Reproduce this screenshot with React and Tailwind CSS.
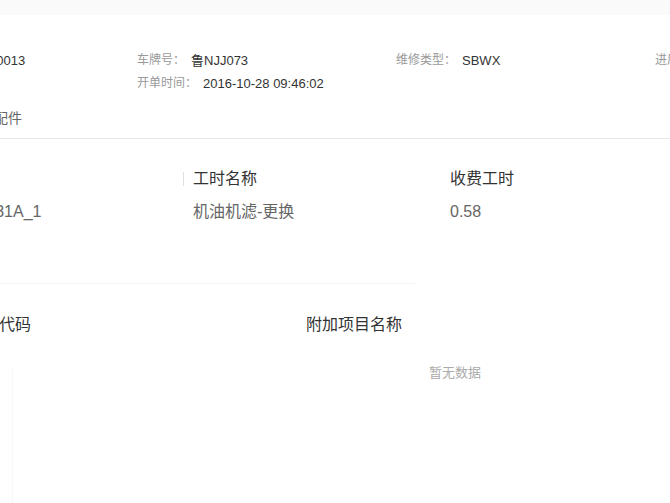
import React from 'react';

const font = { fontFamily: '"Liberation Sans", "Noto Sans CJK SC", sans-serif' };

const infoRows = [
  [
    { label: '工单号：', value: 'WX2016100013' },
    { label: '车牌号：', value: '鲁NJJ073' },
    { label: '维修类型：', value: 'SBWX' },
    { label: '进厂里程：', value: '12000' },
  ],
  [
    { label: '服务顾问：', value: '王军' },
    { label: '开单时间：', value: '2016-10-28 09:46:02' },
    null,
    null,
  ],
];

function InfoItem({ item }) {
  if (!item) return <div />;
  return (
    <div className="flex items-center whitespace-nowrap">
      <span className="text-[12px] text-[#999] mr-[6px]">{item.label}</span>
      <span className="text-[13px] text-[#333]">{item.value}</span>
    </div>
  );
}

export default function App() {
  return (
    <div className="w-[670px] h-[503px] overflow-hidden bg-white relative text-xs" style={font}>
      <div className="h-[15px] bg-[#fafafa]" />

      {/* order info */}
      <div className="pt-[34px] ml-[-122px]">
        {infoRows.map((row, i) => (
          <div key={i} className="grid grid-cols-[259px_259px_259px_259px] h-[23px] items-center">
            {row.map((item, j) => (
              <InfoItem key={j} item={item} />
            ))}
          </div>
        ))}
      </div>

      {/* tabs */}
      <div className="mt-[12px] border-b border-[#e8e8e8] ml-[-34px] pb-[9px] flex gap-8">
        <span className="text-[14px] leading-[22px] text-[#666]">工时配件</span>
      </div>

      {/* labour table */}
      <div className="ml-[-64px] mt-[28px] text-[16px] leading-[24px]">
        <div className="grid grid-cols-[257px_257px_257px] text-[#333]">
          <div>工时代码</div>
          <div className="relative">
            <span className="absolute left-[-10px] top-[5px] h-[14px] w-px bg-[#e0e0e0]" />
            工时名称
          </div>
          <div>收费工时</div>
        </div>
        <div className="grid grid-cols-[257px_257px_257px] text-[#666] mt-[9px]">
          <div className="-ml-[4px]">JY0000131A_1</div>
          <div>机油机滤-更换</div>
          <div>0.58</div>
        </div>
      </div>

      <div className="mt-[59px] h-px w-[415px] bg-[#f4f4f4]" />

      {/* extra items table */}
      <div className="relative">
        <span className="absolute left-[12px] top-[56px] w-px h-[200px] bg-[#f7f7f7]" />
        <div className="ml-[-65px] mt-[29px] grid grid-cols-[371px_300px] text-[16px] leading-[24px] text-[#333]">
          <div>附加项目代码</div>
          <div>附加项目名称</div>
        </div>
        <div className="mt-[26px] pl-[429px] text-[13px] leading-[20px] text-[#aaa]">暂无数据</div>
      </div>
    </div>
  );
}
